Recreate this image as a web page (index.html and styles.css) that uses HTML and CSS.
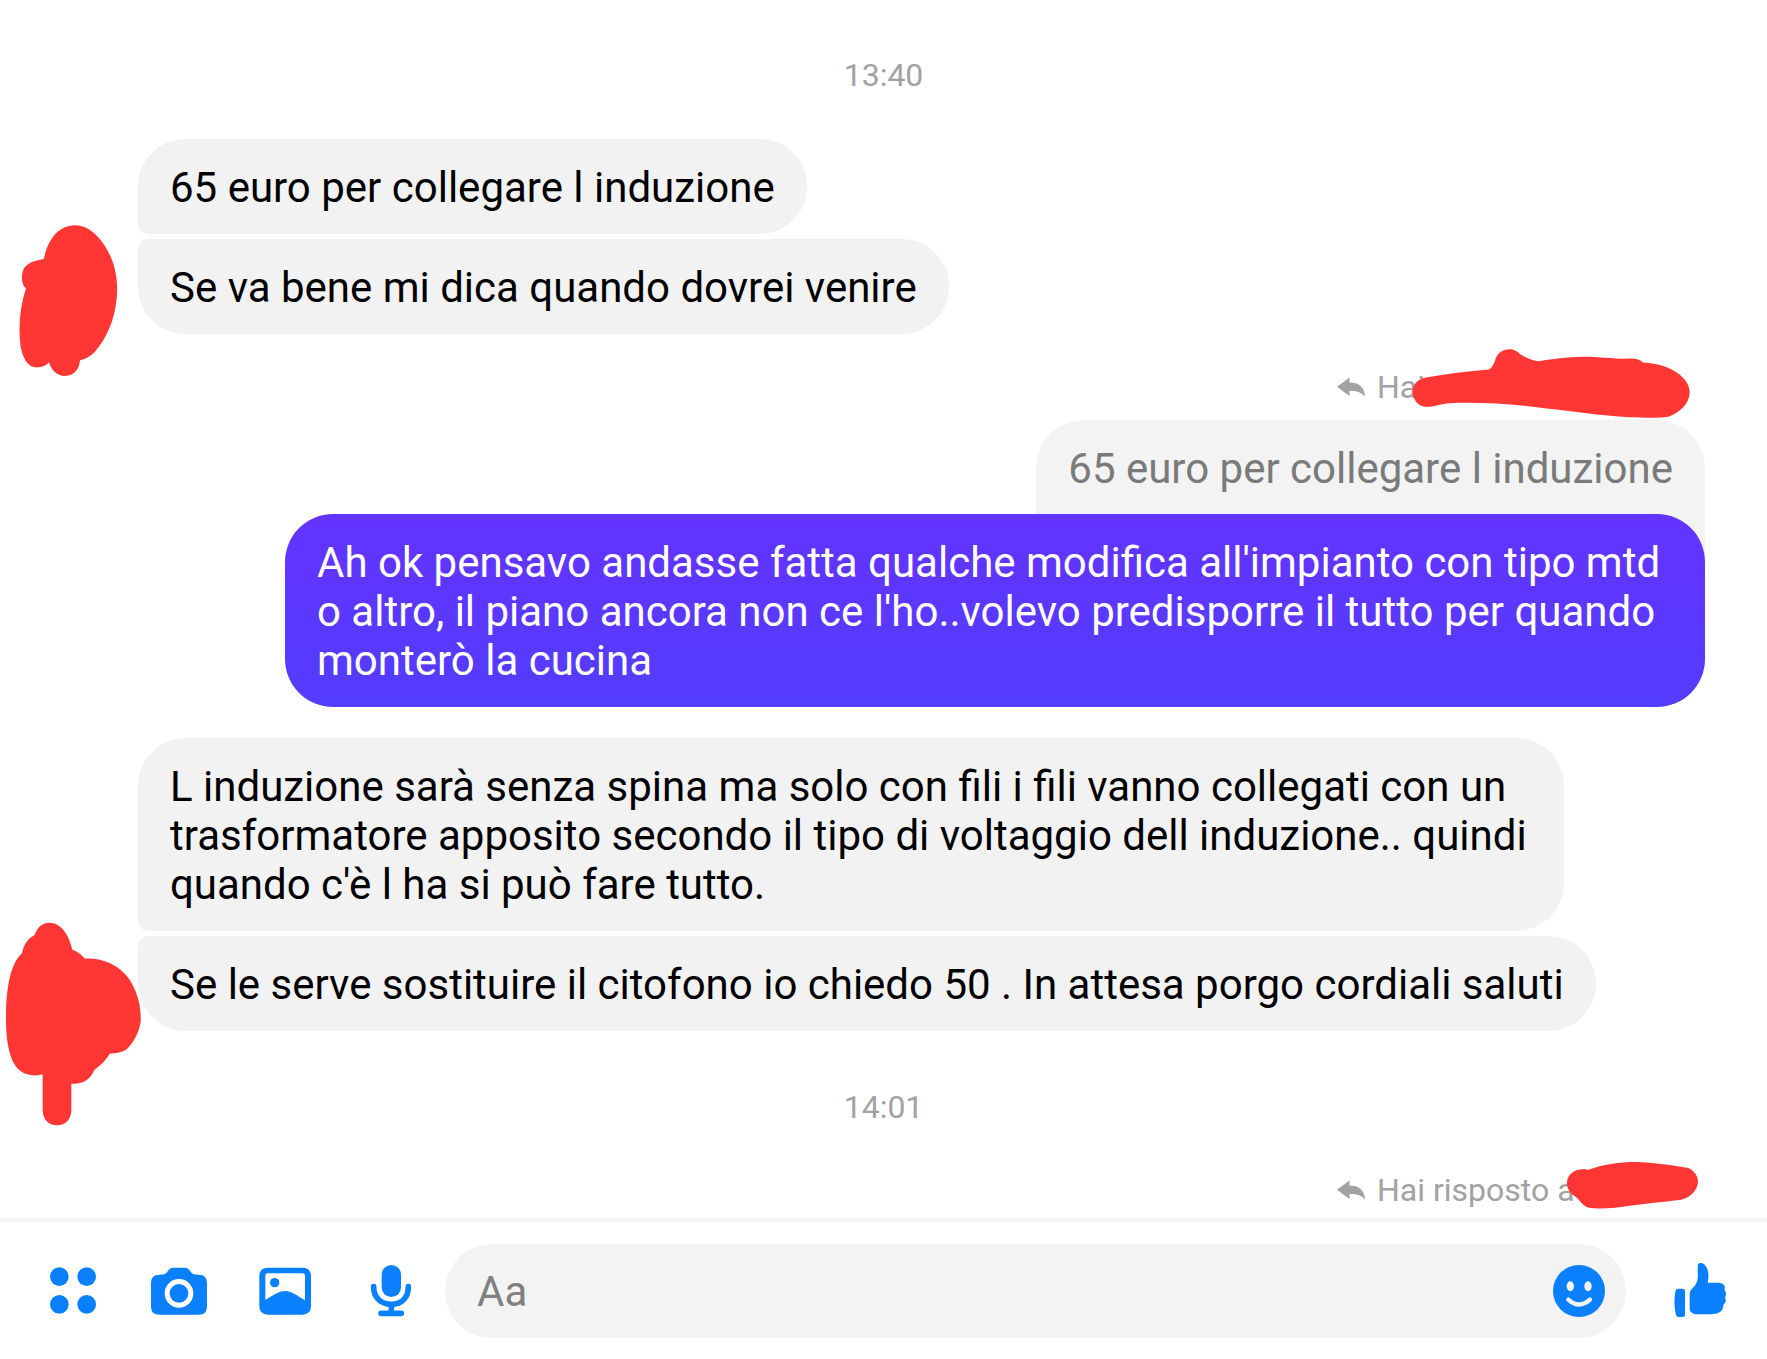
FILE: index.html
```html
<!DOCTYPE html>
<html lang="it">
<head>
    <meta charset="UTF-8">
    <meta name="viewport" content="width=device-width, initial-scale=1.0">
    <title>Chat</title>
    <link rel="stylesheet" href="styles.css">
</head>
<body>
    <main class="chat">
        <time class="timestamp">13:40</time>

        <div class="group incoming">
            <p class="bubble first">65 euro per collegare l induzione</p>
            <p class="bubble last">Se va bene mi dica quando dovrei venire</p>
            <svg class="mark mark-avatar-1" viewBox="0 0 600 540" aria-hidden="true">
                <path d="M225 46C275 46 312 96 332 140C350 180 354 225 350 265C344 330 320 385 285 425C270 440 255 447 240 451C238 478 222 498 195 498C170 498 154 480 147 457C136 470 120 473 105 472C80 468 68 440 62 410C54 350 60 290 78 235C64 225 62 195 72 175C84 155 108 152 132 146C142 95 172 46 225 46Z"/>
            </svg>
        </div>

        <div class="group outgoing">
            <div class="reply-label">
                <svg class="reply-icon" viewBox="0 0 85 60" aria-hidden="true"><path d="M0 29L38 1V16C66 16 84 30 85 59C74 46 60 41 38 42V57Z"/></svg>
                <span>Hai</span>
                <svg class="mark mark-reply-1" viewBox="330 20 850 215" aria-hidden="true">
                    <path d="M378 111C440 100 505 92 567 87C580 80 583 65 589 50C600 25 640 15 662 42C682 54 700 60 718 62C760 56 800 50 850 49C900 49 940 55 975 55C1000 52 1020 54 1030 66C1080 68 1125 85 1150 112C1165 128 1170 142 1170 158C1168 190 1140 215 1110 227C1090 233 1040 232 990 230C900 226 820 212 740 204C640 190 540 185 450 188C420 190 400 200 375 199C350 196 337 172 338 150C340 130 355 115 378 111Z"/>
                </svg>
            </div>
            <p class="bubble quote">65 euro per collegare l induzione</p>
            <p class="bubble own">Ah ok pensavo andasse fatta qualche modifica all'impianto con tipo mtd o altro, il piano ancora non ce l'ho..volevo predisporre il tutto per quando monterò la cucina</p>
        </div>

        <div class="group incoming">
            <p class="bubble first">L induzione sarà senza spina ma solo con fili i fili vanno collegati con un trasformatore apposito secondo il tipo di voltaggio dell induzione.. quindi quando c'è l ha si può fare tutto.</p>
            <p class="bubble last">Se le serve sostituire il citofono io chiedo 50 . In attesa porgo cordiali saluti</p>
            <svg class="mark mark-avatar-2" viewBox="0 0 600 690" aria-hidden="true">
                <path d="M148 38C185 38 208 78 217 119C232 124 246 134 255 146C310 144 358 166 388 208C412 245 424 290 422 335C416 370 402 395 380 418C366 428 348 430 329 431C318 452 300 466 283 480C270 508 250 524 214 521V600C214 628 196 646 171 646C146 646 128 628 128 600V493C105 500 72 496 52 475C22 440 17 370 18 310C20 240 28 165 66 130C70 105 84 85 104 75C112 52 126 38 148 38Z"/>
            </svg>
        </div>

        <time class="timestamp">14:01</time>

        <div class="group outgoing">
            <div class="reply-label">
                <svg class="reply-icon" viewBox="0 0 85 60" aria-hidden="true"><path d="M0 29L38 1V16C66 16 84 30 85 59C74 46 60 41 38 42V57Z"/></svg>
                <span>Hai risposto a</span>
                <svg class="mark mark-reply-2" viewBox="795 30 405 150" aria-hidden="true">
                    <path d="M865 59C910 44 955 36 1010 36C1060 38 1120 46 1165 54C1185 64 1195 80 1194 97C1192 122 1168 146 1140 150C1080 156 1010 165 945 173C915 176 885 176 866 173C845 168 840 148 824 138C808 128 800 112 801 95C804 72 825 52 865 59Z"/>
                </svg>
            </div>
        </div>
    </main>

    <footer class="composer">
        <div class="tools">
            <button class="icon-btn" type="button" aria-label="Altro">
                <svg viewBox="0 0 180 180">
                    <circle cx="49" cy="47" r="28"/>
                    <circle cx="131" cy="47" r="28"/>
                    <circle cx="49" cy="130" r="28"/>
                    <circle cx="131" cy="130" r="28"/>
                </svg>
            </button>
            <button class="icon-btn" type="button" aria-label="Fotocamera">
                <svg viewBox="0 0 180 180">
                    <path fill-rule="evenodd" d="M32 41C48 41 50 39 56 31C62 22 66 20 76 20H104C114 20 118 22 124 31C130 39 132 41 148 41C166 41 174 50 174 68V134C174 153 166 161 148 161H32C14 161 6 153 6 134V68C6 50 14 41 32 41ZM90 54A43 43 0 1 0 90 140A43 43 0 1 0 90 54Z"/>
                    <circle cx="90" cy="97" r="28"/>
                </svg>
            </button>
            <button class="icon-btn" type="button" aria-label="Galleria">
                <svg viewBox="0 0 180 180">
                    <path fill-rule="evenodd" d="M39 20H142Q168 20 168 46V135Q168 161 142 161H39Q13 161 13 135V46Q13 20 39 20ZM38 37Q31 37 31 44V116C55 104 70 90 90 90C110 90 126 104 150 118V44Q150 37 143 37Z"/>
                    <circle cx="59" cy="65" r="14"/>
                </svg>
            </button>
            <button class="icon-btn" type="button" aria-label="Messaggio vocale">
                <svg viewBox="0 0 180 180">
                    <rect x="62" y="12" width="58" height="96" rx="29"/>
                    <path class="line" d="M38 77C38 108 58 130 91 130C124 130 142 108 142 77M91 130V156M60 157H121"/>
                </svg>
            </button>
        </div>

        <div class="field">
            <input class="field-input" type="text" placeholder="Aa" aria-label="Messaggio">
            <button class="icon-btn" type="button" aria-label="Emoji">
                <svg viewBox="0 0 180 180">
                    <circle cx="90" cy="90" r="78"/>
                    <ellipse class="hole" cx="64" cy="76" rx="11" ry="15"/>
                    <ellipse class="hole" cx="117" cy="76" rx="11" ry="15"/>
                    <path class="smile" d="M58 116Q90 145 123 116"/>
                </svg>
            </button>
        </div>

        <button class="icon-btn" type="button" aria-label="Mi piace">
            <svg viewBox="0 0 180 180">
                <path d="M24 83H38Q45 83 45 90V161Q45 168 38 168H28Q19 168 17 158Q10 124 16 92Q17 83 24 83Z"/>
                <path d="M59 102C59 86 70 80 76 72C84 60 84 50 83 30V14C83 4 96 4 104 11C115 22 118 42 113 65H142C160 65 168 74 163 86C170 94 168 104 165 110C170 118 167 126 160 131C161 150 148 160 120 160H85C68 160 59 154 59 142Z"/>
            </svg>
        </button>
    </footer>
</body>
</html>
```
FILE: styles.css
```css
* {
    box-sizing: border-box;
}

body {
    margin: 0;
    min-height: 100vh;
    display: flex;
    flex-direction: column;
    background: #ffffff;
    color: #000000;
    font-family: Roboto, "Liberation Sans", sans-serif;
    font-size: 42px;
    line-height: 49px;
}

/* Conversation */
.chat {
    flex: 1;
    display: flex;
    flex-direction: column;
    padding: 57px 62px 10px 138px;
}

.timestamp {
    /* centred on the window, not on the message column */
    margin-left: -76px;
    text-align: center;
    color: #a2a2a2;
    font-size: 32px;
    line-height: 36px;
}

.group {
    position: relative;
    display: flex;
    flex-direction: column;
}

.incoming {
    align-items: flex-start;
    gap: 5px;
    margin: 31px 0 58px;
}

.timestamp + .incoming {
    margin: 46px 0 35px;
}

.outgoing {
    align-items: flex-end;
}

.timestamp + .outgoing {
    margin-top: 47px;
}

.bubble {
    margin: 0;
    max-width: 1420px;
    padding: 24px 32px 22px;
    border-radius: 48px;
    background: #f2f2f2;
}

.first {
    max-width: 1426px;
    border-bottom-left-radius: 10px;
}

.last {
    max-width: 1480px;
    border-top-left-radius: 10px;
}

.quote {
    padding-bottom: 64px;
    border-radius: 48px 48px 0 0;
    background: #f3f3f3;
    color: #7a7a7a;
}

.own {
    position: relative;
    margin-top: -43px;
    background: linear-gradient(#6333ff, #533dff);
    color: #ffffff;
}

.reply-label {
    position: relative;
    display: flex;
    align-items: center;
    gap: 12px;
    width: 368px;
    margin-bottom: 15px;
    color: #a2a2a2;
    font-size: 32px;
    line-height: 36px;
}

.timestamp + .outgoing .reply-label {
    margin-bottom: 0;
}

.reply-icon {
    width: 28px;
    height: 20px;
    fill: #a2a2a2;
}

/* Marker strokes over avatars and names */
.mark {
    position: absolute;
    fill: #ff3633;
}

.mark-avatar-1 {
    left: -138px;
    bottom: -56px;
    width: 200px;
    height: 180px;
}

.mark-avatar-2 {
    left: -138px;
    bottom: -109px;
    width: 200px;
    height: 230px;
}

.mark-reply-1 {
    left: 73px;
    top: -22px;
    width: 283px;
    height: 72px;
}

.mark-reply-2 {
    left: 228px;
    top: -12px;
    width: 135px;
    height: 50px;
}

/* Composer */
.composer {
    display: flex;
    align-items: center;
    padding: 22px 37px 21px 43px;
    border-top: 4px solid #f3f3f3;
}

.tools {
    display: flex;
    gap: 46px;
    margin-right: 24px;
}

.icon-btn {
    flex: none;
    width: 60px;
    height: 60px;
    padding: 0;
    border: none;
    background: none;
    cursor: pointer;
}

.icon-btn svg {
    display: block;
    width: 100%;
    height: 100%;
    fill: #0a80ff;
}

.icon-btn .line {
    fill: none;
    stroke: #0a80ff;
    stroke-width: 17;
    stroke-linecap: round;
}

.icon-btn .hole {
    fill: #f3f3f3;
}

.icon-btn .smile {
    fill: none;
    stroke: #f3f3f3;
    stroke-width: 13;
    stroke-linecap: round;
}

.field {
    flex: 1;
    display: flex;
    align-items: center;
    height: 94px;
    margin-right: 44px;
    padding: 0 17px 0 32px;
    border-radius: 47px;
    background: #f3f3f3;
}

.field-input {
    flex: 1;
    min-width: 0;
    padding: 0;
    border: none;
    outline: none;
    background: none;
    color: #000000;
    font: inherit;
}

.field-input::placeholder {
    color: #808080;
    opacity: 1;
}
```
